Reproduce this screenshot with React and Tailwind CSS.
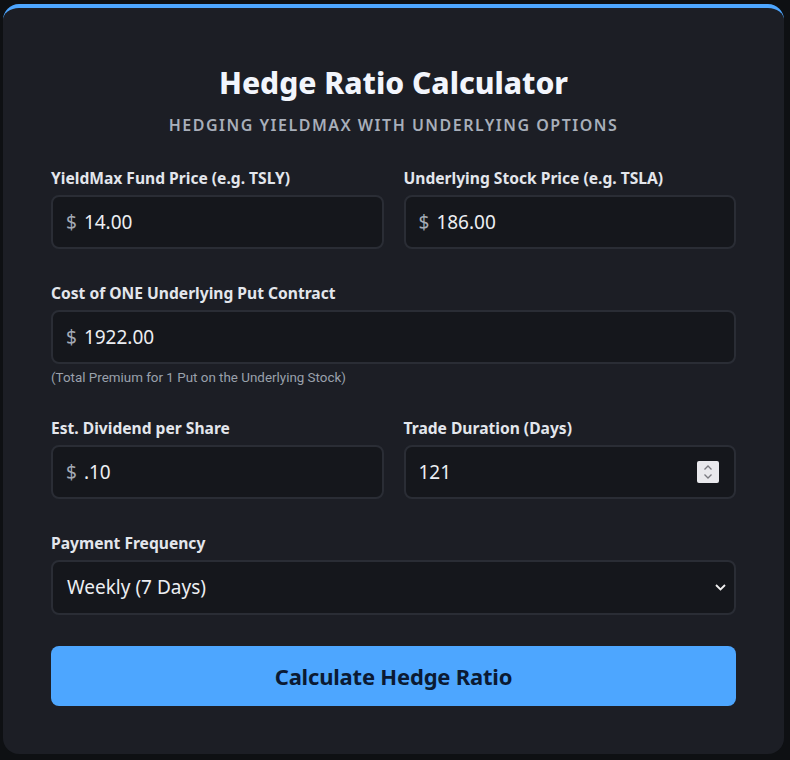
import React from "react";

const font = { fontFamily: '"Noto Sans", "Open Sans", sans-serif' };

function Label({ children }) {
  return (
    <div className="mb-[7px] text-[15.6px] font-bold leading-5 text-[#e3e6ec]">
      {children}
    </div>
  );
}

function MoneyInput({ value }) {
  return (
    <div className="flex h-[54px] items-center rounded-lg border-2 border-[#2a2d35] bg-[#15171c] pl-[13px]">
      <span className="text-[19px] text-[#a3aab5]">$</span>
      <input
        defaultValue={value}
        className="ml-[7px] w-full bg-transparent text-[19px] text-[#eceef2] outline-none"
        style={font}
      />
    </div>
  );
}

export default function App() {
  return (
    <div className="min-h-[760px] bg-[#0e1013] pl-[3px] pr-[6px] pt-[4px] pb-[6px]" style={font}>
      <div className="rounded-2xl border-t-4 border-[#4da6ff] bg-[#1c1e25] px-[48px] pt-[57px] pb-[48px]">
        <h1 className="text-center text-[30px] font-extrabold leading-9 text-[#f2f5fc]">
          Hedge Ratio Calculator
        </h1>
        <p className="mt-[12px] text-center text-[16px] font-semibold uppercase leading-6 tracking-[1.5px] text-[#a8afba]">
          Hedging YieldMax with Underlying Options
        </p>

        <div className="mt-[31px] grid grid-cols-2 gap-x-[20px]">
          <div>
            <Label>YieldMax Fund Price (e.g. TSLY)</Label>
            <MoneyInput value="14.00" />
          </div>
          <div>
            <Label>Underlying Stock Price (e.g. TSLA)</Label>
            <MoneyInput value="186.00" />
          </div>
        </div>

        <div className="mt-[34px]">
          <Label>Cost of ONE Underlying Put Contract</Label>
          <MoneyInput value="1922.00" />
          <div
            className="mt-[6px] text-[13.4px] leading-4 text-[#9aa1ac]"
            style={{ fontFamily: '"Roboto", "Noto Sans", sans-serif' }}
          >
            (Total Premium for 1 Put on the Underlying Stock)
          </div>
        </div>

        <div className="mt-[32px] grid grid-cols-2 gap-x-[20px]">
          <div>
            <Label>Est. Dividend per Share</Label>
            <MoneyInput value=".10" />
          </div>
          <div>
            <Label>Trade Duration (Days)</Label>
            <div className="relative flex h-[54px] items-center rounded-lg border-2 border-[#2a2d35] bg-[#15171c] pl-[13px]">
              <input
                defaultValue="121"
                className="w-full bg-transparent text-[19px] text-[#eceef2] outline-none"
                style={font}
              />
              <div className="absolute right-[15px] top-[14px] flex h-[22px] w-[22px] flex-col items-center justify-center rounded-[2px] bg-[#e9e9ed]">
                <svg width="10" height="16" viewBox="0 0 10 16" fill="none" stroke="#7a7a80" strokeWidth="1.3">
                  <path d="M1.5 5.5 L5 2 L8.5 5.5" />
                  <path d="M1.5 10.5 L5 14 L8.5 10.5" />
                </svg>
              </div>
            </div>
          </div>
        </div>

        <div className="mt-[34px]">
          <Label>Payment Frequency</Label>
          <div className="relative flex h-[55px] items-center rounded-lg border-2 border-[#2a2d35] bg-[#15171c] pl-[14px]">
            <span className="text-[19px] text-[#eceef2]">Weekly (7 Days)</span>
            <svg
              className="absolute right-[8px] top-[22px]"
              width="11"
              height="7"
              viewBox="0 0 11 7"
              fill="none"
              stroke="#f0f0f0"
              strokeWidth="1.8"
            >
              <path d="M1 1 L5.5 5.5 L10 1" />
            </svg>
          </div>
        </div>

        <button
          className="mt-[31px] flex h-[60px] w-full items-center justify-center rounded-lg bg-[#4da6ff] text-[22px] font-bold tracking-[-0.2px] text-[#0b1a33]"
          style={font}
        >
          Calculate Hedge Ratio
        </button>
      </div>
    </div>
  );
}
